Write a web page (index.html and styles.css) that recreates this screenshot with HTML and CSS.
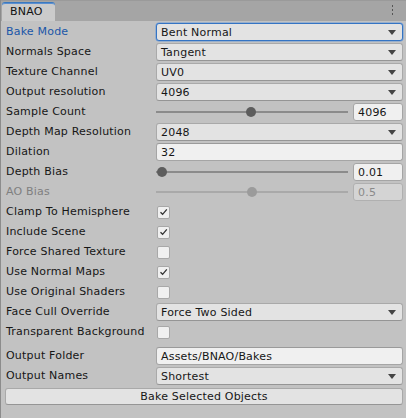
FILE: index.html
```html
<!DOCTYPE html>
<html>
<head>
<meta charset="utf-8">
<link rel="stylesheet" href="styles.css">
</head>
<body>
<div class="window">
  <div class="tabbar">
    <div class="tab">BNAO</div>
    <div class="menu">
      <svg width="3" height="10" viewBox="0 0 3 10"><rect x="1" y="0" width="1" height="2" fill="#555"/><rect x="1" y="4" width="1" height="2" fill="#555"/><rect x="1" y="8" width="1" height="2" fill="#555"/></svg>
    </div>
  </div>
  <div class="body">
    <div class="row"><div class="label focus">Bake Mode</div><div class="dropdown focused"><span>Bent Normal</span><i class="arrow"></i></div></div>
    <div class="row"><div class="label">Normals Space</div><div class="dropdown"><span>Tangent</span><i class="arrow"></i></div></div>
    <div class="row"><div class="label">Texture Channel</div><div class="dropdown"><span>UV0</span><i class="arrow"></i></div></div>
    <div class="row"><div class="label">Output resolution</div><div class="dropdown"><span>4096</span><i class="arrow"></i></div></div>
    <div class="row"><div class="label">Sample Count</div><div class="slider"><div class="track"><div class="thumb" style="left: 46.5%"></div></div><div class="num">4096</div></div></div>
    <div class="row"><div class="label">Depth Map Resolution</div><div class="dropdown"><span>2048</span><i class="arrow"></i></div></div>
    <div class="row"><div class="label">Dilation</div><div class="textfield">32</div></div>
    <div class="row"><div class="label">Depth Bias</div><div class="slider"><div class="track"><div class="thumb" style="left: 0%"></div></div><div class="num">0.01</div></div></div>
    <div class="row disabled"><div class="label">AO Bias</div><div class="slider"><div class="track"><div class="thumb" style="left: 47%"></div></div><div class="num">0.5</div></div></div>
    <div class="row"><div class="label">Clamp To Hemisphere</div><div class="check on"><svg width="9" height="8" viewBox="0 0 9 8"><path d="M1.5 4.2 L3.6 6.3 L7.8 1.4" fill="none" stroke="#333" stroke-width="1.3"/></svg></div></div>
    <div class="row"><div class="label">Include Scene</div><div class="check on"><svg width="9" height="8" viewBox="0 0 9 8"><path d="M1.5 4.2 L3.6 6.3 L7.8 1.4" fill="none" stroke="#333" stroke-width="1.3"/></svg></div></div>
    <div class="row"><div class="label">Force Shared Texture</div><div class="check"></div></div>
    <div class="row"><div class="label">Use Normal Maps</div><div class="check on"><svg width="9" height="8" viewBox="0 0 9 8"><path d="M1.5 4.2 L3.6 6.3 L7.8 1.4" fill="none" stroke="#333" stroke-width="1.3"/></svg></div></div>
    <div class="row"><div class="label">Use Original Shaders</div><div class="check"></div></div>
    <div class="row"><div class="label">Face Cull Override</div><div class="dropdown"><span>Force Two Sided</span><i class="arrow"></i></div></div>
    <div class="row"><div class="label">Transparent Background</div><div class="check"></div></div>
    <div class="row spaced"><div class="label">Output Folder</div><div class="textfield">Assets/BNAO/Bakes</div></div>
    <div class="row"><div class="label">Output Names</div><div class="dropdown"><span>Shortest</span><i class="arrow"></i></div></div>
    <div class="buttonrow"><div class="button">Bake Selected Objects</div></div>
  </div>
</div>
</body>
</html>
```

FILE: styles.css
```css
* { box-sizing: border-box; }
html, body { margin: 0; padding: 0; }
body {
  width: 406px;
  height: 418px;
  overflow: hidden;
  background: #c2c2c2;
  font-family: "DejaVu Sans", Verdana, sans-serif;
  font-size: 11px;
  letter-spacing: 0.2px;
  color: #161616;
}
.window {
  width: 406px;
  height: 418px;
  display: flex;
  flex-direction: column;
  border-left: 1px solid #8c8c8c;
  background: #c2c2c2;
}
.tabbar {
  height: 21px;
  background: #a5a5a5;
  border-top: 1px solid #9a9a9a;
  display: flex;
  align-items: flex-end;
  justify-content: space-between;
  padding-left: 1px;
  padding-right: 12px;
}
.tab {
  width: 53px;
  height: 19px;
  background: #cbcbcb;
  border-top: 1px solid #3a79c0;
  border-radius: 3px 3px 0 0;
  box-shadow: inset 0 1px 0 #5b8fd0;
  padding-left: 8px;
  line-height: 18px;
  color: #111;
}
.menu {
  height: 19px;
  display: flex;
  align-items: center;
  padding-bottom: 3px;
}
.menu svg { display: block; }
.body {
  flex: 1;
  padding: 1px 3px 0 5px;
  display: flex;
  flex-direction: column;
}
.row {
  height: 20px;
  display: grid;
  grid-template-columns: 150px 1fr;
  align-items: center;
}
.row.spaced { margin-top: 4px; }
.label {
  white-space: nowrap;
  line-height: 20px;
}
.label.focus { color: #1a56a8; }
.disabled .label { color: #7f7f7f; }
.dropdown {
  height: 18px;
  background: #e3e3e3;
  border: 1px solid #a9a9a9;
  border-bottom-color: #959595;
  border-radius: 3px;
  display: flex;
  align-items: center;
  justify-content: space-between;
  padding: 0 6px 0 4px;
  white-space: nowrap;
}
.dropdown.focused {
  border: 1px solid #3474c4;
  box-shadow: 0 0 0 0.5px #6e9bd6;
}
.arrow {
  width: 0;
  height: 0;
  border-left: 4px solid transparent;
  border-right: 4px solid transparent;
  border-top: 5px solid #444;
}
.textfield {
  height: 18px;
  background: #f0f0f0;
  border: 1px solid #a5a5a5;
  border-top-color: #9a9a9a;
  border-radius: 3px;
  display: flex;
  align-items: center;
  padding-left: 4px;
  white-space: nowrap;
}
.slider {
  display: flex;
  align-items: center;
  gap: 5px;
}
.track {
  flex: 1;
  height: 2px;
  background: #8b8b8b;
  position: relative;
}
.thumb {
  position: absolute;
  top: -4px;
  width: 10px;
  height: 10px;
  margin-left: 1px;
  border-radius: 50%;
  background: #5d5d5d;
}
.num {
  width: 50px;
  height: 18px;
  background: #f0f0f0;
  border: 1px solid #a5a5a5;
  border-radius: 3px;
  display: flex;
  align-items: center;
  padding-left: 4px;
}
.disabled .track { background: #a9a9a9; }
.disabled .thumb { background: #9b9b9b; }
.disabled .num { background: #d4d4d4; color: #8a8a8a; border-color: #b0b0b0; }
.check {
  width: 13px;
  height: 13px;
  margin-left: 1px;
  background: #f0f0f0;
  border: 1px solid #a8a8a8;
  border-radius: 2px;
  display: flex;
  align-items: center;
  justify-content: center;
}
.check svg { display: block; }
.buttonrow {
  height: 20px;
  padding-top: 2px;
}
.button {
  height: 17px;
  margin-left: -1px;
  background: #e3e3e3;
  border: 1px solid #a9a9a9;
  border-bottom-color: #959595;
  border-radius: 3px;
  display: flex;
  align-items: center;
  justify-content: center;
  white-space: nowrap;
}
```
